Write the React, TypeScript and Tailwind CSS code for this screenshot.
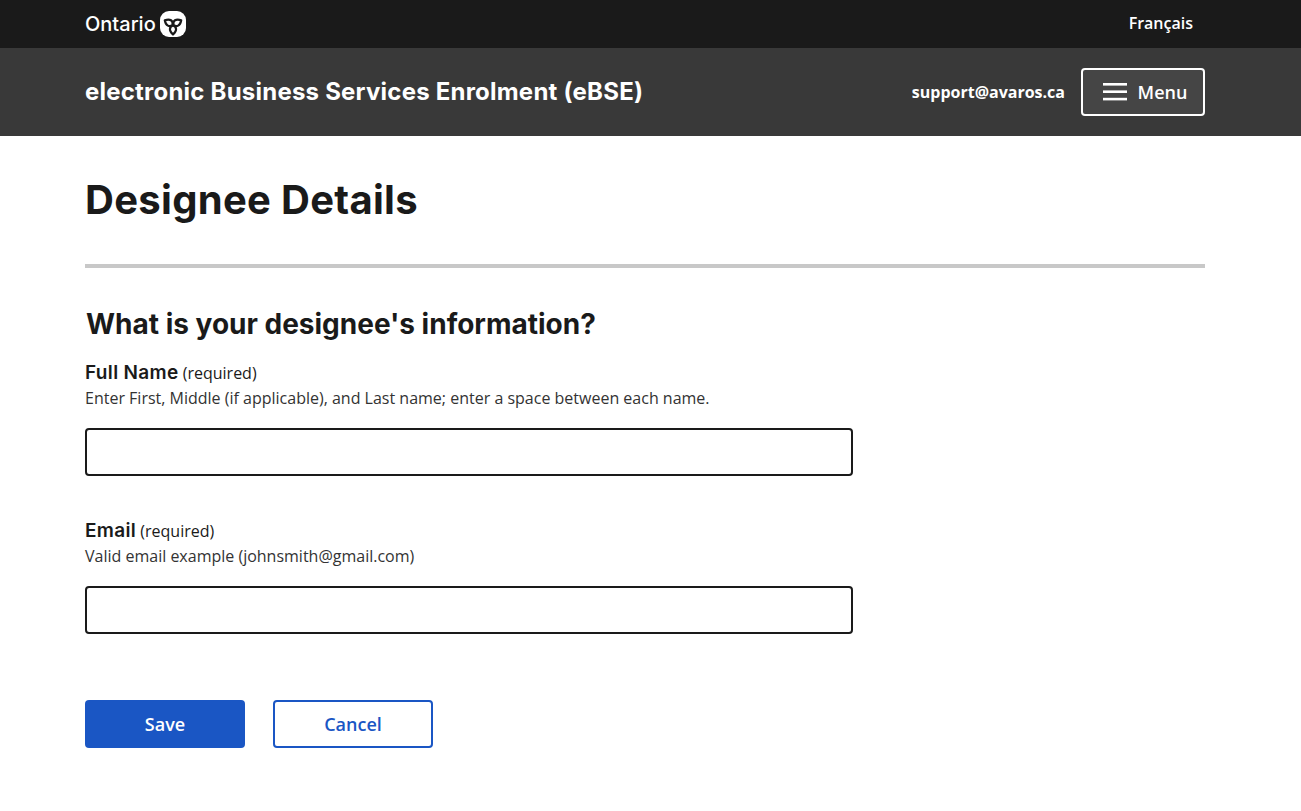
const heading = "font-['Inter','Lato',sans-serif]";

function Field({ label, hint }: { label: string; hint: string }) {
  return (
    <div>
      <div className="h-[24px] translate-y-[1px] leading-[24px] text-[#1a1a1a]">
        <span className={`${heading} text-[19px] font-semibold tracking-[0.33px]`}>{label}</span>{" "}
        <span className="text-[16px]">(required)</span>
      </div>
      <p className="mt-[2px] h-[24px] text-[16px] leading-[24px] text-[#333333]">{hint}</p>
      <input type="text" className="mt-[18px] block h-[48px] w-[768px] rounded-[4px] border-2 border-[#1a1a1a] bg-white" />
    </div>
  );
}

function Logo() {
  const petal = "M13 13.5C9.2 15 8.6 18.6 13 22.5C17.4 18.6 16.8 15 13 13.5Z";
  return (
    <svg width="26" height="26" viewBox="0 0 26 26" className="ml-[4px]">
      <rect width="26" height="26" rx="9" fill="#fff" />
      <g fill="#fff" stroke="#1a1a1a" strokeWidth="2.2" strokeLinejoin="round" transform="translate(0 1)">
        <path d={petal} />
        <path d={petal} transform="rotate(120 13 13)" />
        <path d={petal} transform="rotate(240 13 13)" />
      </g>
    </svg>
  );
}

export default function App() {
  return (
    <div className="min-h-[811px] bg-white font-['Open_Sans','Noto_Sans',sans-serif] text-[#1a1a1a]">
      <div className="h-[48px] bg-[#1a1a1a]">
        <div className="flex h-full items-center justify-between pl-[85px] pr-[108px]">
          <div className="flex items-center">
            <span className={`${heading} text-[20px] leading-[28px] font-medium text-white`}>Ontario</span>
            <Logo />
          </div>
          <a className="-translate-y-[1px] text-[16px] font-semibold text-white">Français</a>
        </div>
      </div>

      <div className="flex h-[88px] items-center justify-between bg-[#393939] pl-[85px] pr-[96px]">
        <div className={`${heading} text-[24px] font-bold tracking-[0.22px] text-white`}>electronic Business Services Enrolment (eBSE)</div>
        <div className="flex items-center">
          <span className="text-[16px] font-bold text-white">support@avaros.ca</span>
          <button className="ml-[16px] flex h-[48px] w-[124px] items-center justify-center gap-[11px] rounded-[4px] border-2 border-white bg-[#454545] pl-[4px] text-[18px] font-semibold text-white">
            <svg width="24" height="18" viewBox="0 0 24 18" fill="#fff">
              <rect y="0" width="24" height="2.6" />
              <rect y="7.4" width="24" height="2.6" />
              <rect y="14.8" width="24" height="2.6" />
            </svg>
            Menu
          </button>
        </div>
      </div>

      <main className="pl-[85px] pr-[96px]">
        <h1 className={`${heading} pt-[38px] text-[40px] leading-[52px] font-bold tracking-[0.3px]`}>Designee Details</h1>
        <div className="mt-[38px] h-[4px] bg-[#c8c8c8]" />
        <h2 className={`${heading} mt-[38px] pl-[1px] text-[28px] leading-[36px] font-bold`}>What is your designee's information?</h2>
        <div className="mt-[18px]">
          <Field label="Full Name" hint="Enter First, Middle (if applicable), and Last name; enter a space between each name." />
        </div>
        <div className="mt-[42px]">
          <Field label="Email" hint="Valid email example (johnsmith@gmail.com)" />
        </div>
        <div className="mt-[66px] flex gap-[28px]">
          <button className="h-[48px] w-[160px] rounded-[4px] bg-[#1a56c4] text-[18px] font-semibold text-white">Save</button>
          <button className="h-[48px] w-[160px] rounded-[4px] border-2 border-[#1a56c4] bg-white text-[18px] font-semibold text-[#1a56c4]">Cancel</button>
        </div>
      </main>
    </div>
  );
}
